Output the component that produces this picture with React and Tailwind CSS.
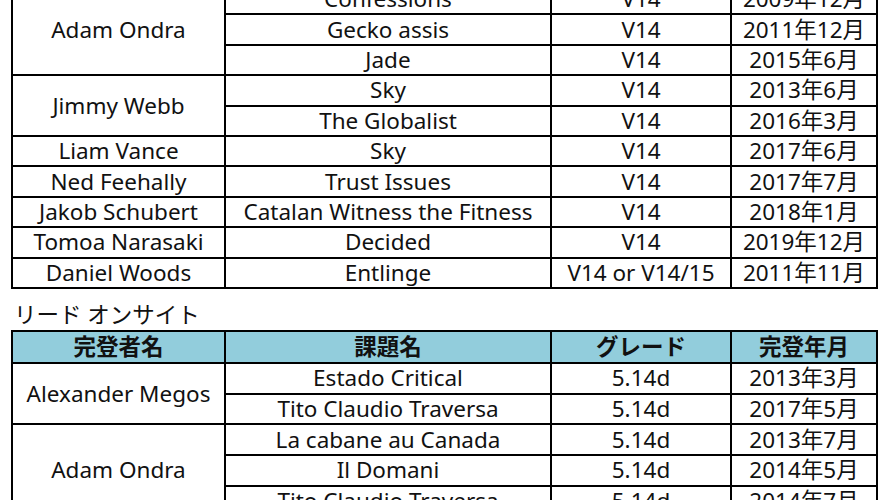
const boulder = [
  { name: 'Adam Ondra', span: 3, title: 'Confessions', grade: 'V14', date: '2009年12月' },
  { title: 'Gecko assis', grade: 'V14', date: '2011年12月' },
  { title: 'Jade', grade: 'V14', date: '2015年6月' },
  { name: 'Jimmy Webb', span: 2, title: 'Sky', grade: 'V14', date: '2013年6月' },
  { title: 'The Globalist', grade: 'V14', date: '2016年3月' },
  { name: 'Liam Vance', span: 1, title: 'Sky', grade: 'V14', date: '2017年6月' },
  { name: 'Ned Feehally', span: 1, title: 'Trust Issues', grade: 'V14', date: '2017年7月' },
  { name: 'Jakob Schubert', span: 1, title: 'Catalan Witness the Fitness', grade: 'V14', date: '2018年1月' },
  { name: 'Tomoa Narasaki', span: 1, title: 'Decided', grade: 'V14', date: '2019年12月' },
  { name: 'Daniel Woods', span: 1, title: 'Entlinge', grade: 'V14 or V14/15', date: '2011年11月' },
];

const lead = [
  { name: 'Alexander Megos', span: 2, title: 'Estado Critical', grade: '5.14d', date: '2013年3月' },
  { title: 'Tito Claudio Traversa', grade: '5.14d', date: '2017年5月' },
  { name: 'Adam Ondra', span: 3, title: 'La cabane au Canada', grade: '5.14d', date: '2013年7月' },
  { title: 'Il Domani', grade: '5.14d', date: '2014年5月' },
  { title: 'Tito Claudio Traversa', grade: '5.14d', date: '2014年7月' },
];

const cell = 'border-2 border-black text-center p-0 leading-[26px] font-normal whitespace-nowrap';

function Rows({ rows, rowClass }) {
  return rows.map((r, i) => (
    <tr key={i} className={rowClass}>
      {r.name && (
        <td rowSpan={r.span} className={cell}>
          {r.name}
        </td>
      )}
      <td className={cell}>{r.title}</td>
      <td className={cell}>{r.grade}</td>
      <td className={cell}>{r.date}</td>
    </tr>
  ));
}

function Cols() {
  return (
    <colgroup>
      <col className="w-[213px]" />
      <col className="w-[326px]" />
      <col className="w-[180px]" />
      <col className="w-[146px]" />
    </colgroup>
  );
}

export default function App() {
  return (
    <div className="w-[890px] h-[500px] overflow-hidden bg-white text-[#111] text-[22.5px] font-['Noto_Sans','Noto_Sans_CJK_JP',sans-serif]">
      <div className="-mt-[17px] pl-[11px]">
        <table className="border-collapse table-fixed w-[866px]">
          <Cols />
          <tbody>
            <Rows rows={boulder} rowClass="h-[30.4px]" />
          </tbody>
        </table>

        <p className="mt-[13px] mb-[2px] pl-[3px] leading-[26px]">リード オンサイト</p>

        <table className="border-collapse table-fixed w-[866px]">
          <Cols />
          <thead>
            <tr className="h-[32px] bg-[#92cddc]">
              <th className={cell + ' !font-bold'}>完登者名</th>
              <th className={cell + ' !font-bold'}>課題名</th>
              <th className={cell + ' !font-bold'}>グレード</th>
              <th className={cell + ' !font-bold'}>完登年月</th>
            </tr>
          </thead>
          <tbody>
            <Rows rows={lead} rowClass="h-[30.7px]" />
          </tbody>
        </table>
      </div>
    </div>
  );
}
